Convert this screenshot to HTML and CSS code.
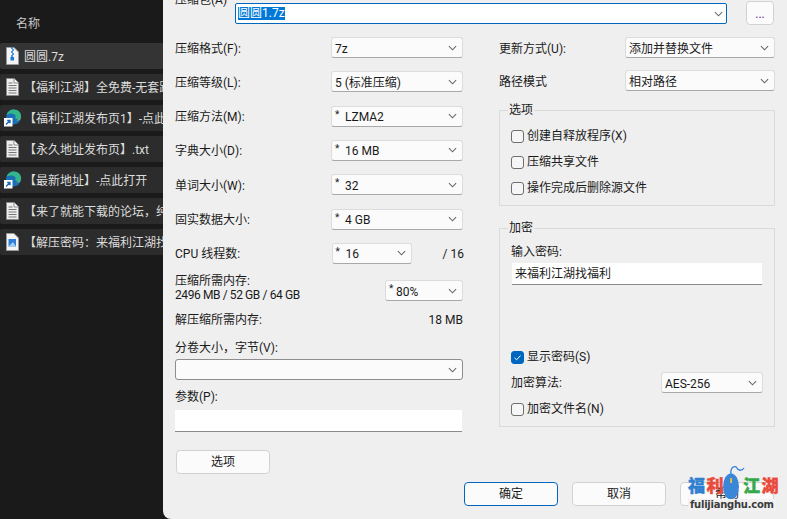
FILE: index.html
```html
<!DOCTYPE html>
<html lang="zh-CN">
<head>
<meta charset="utf-8">
<title>压缩包</title>
<link rel="stylesheet" href="styles.css">
</head>
<body>
<svg class="defs" width="0" height="0" aria-hidden="true">
  <defs>
    <symbol id="chev" viewBox="0 0 10 6"><path d="M1 1 L5 5 L9 1" fill="none" stroke="#666" stroke-width="1.200"/></symbol>
    <symbol id="doc" viewBox="0 0 14 18"><path d="M1.500 .5H9L13.500 5V17.500H1.500Z" fill="#eee" stroke="#8a8a8a"/><path d="M9 .5V5H13.500" fill="#fff" stroke="#8a8a8a"/><path d="M3.500 5H7.500M3.500 7.500H11.500M3.500 10H11.500M3.500 12.500H11.500M3.500 15H11.500" stroke="#777" stroke-width="1"/></symbol>
    <symbol id="edge" viewBox="0 0 18 18">
      <circle cx="9.500" cy="8" r="7.500" fill="#1b6fb4"/>
      <path d="M2.500 6C4 1 9 -.5 13 1C16.500 2.500 17.500 6 17 8.500C16 10.500 12 10.500 11 9C13 7 10.500 4.500 7.500 4.500C5 4.500 3.500 5 2.500 6Z" fill="#35b58a"/>
      <path d="M17 8.500C16.500 11 14 12 12 11C14.500 11 16 10 17 8.500Z" fill="#9ad84e"/>
      <rect x="0" y="9" width="8.500" height="8.500" fill="#fff"/>
      <path d="M2 15.500 L5.500 12 M3.200 11.500H6V14.300" fill="none" stroke="#1668b8" stroke-width="1.300"/>
    </symbol>
    <symbol id="zip" viewBox="0 0 14 18"><path d="M1.500 .5H9L13.500 5V17.500H1.500Z" fill="#f4f4f4" stroke="#9a9a9a"/><path d="M6 1H8M7 3H9M6 5H8M7 7H9M6 9H8" stroke="#1a7ad8" stroke-width="1.400"/><rect x="5.500" y="10" width="3.500" height="3.500" fill="#1a7ad8"/></symbol>
    <symbol id="pic" viewBox="0 0 14 18"><path d="M1.500 .5H9L13.500 5V17.500H1.500Z" fill="#f4f4f4" stroke="#9a9a9a"/><rect x="3.500" y="6" width="7.500" height="7.500" fill="#2f7fd6"/><path d="M3.500 13.500L8 9L11 13.500Z" fill="#a8d0f5"/></symbol>
  </defs>
</svg>

<div class="desktop">
  <aside class="files">
    <div class="files-head">名称</div>
    <ul class="file-list">
      <li class="file file-active"><svg class="ficon"><use href="#zip"/></svg><span class="fname">圆圆.7z</span></li>
      <li class="file"><svg class="ficon"><use href="#doc"/></svg><span class="fname">【福利江湖】全免费-无套路</span></li>
      <li class="file"><svg class="ficon ficon-edge"><use href="#edge"/></svg><span class="fname">【福利江湖发布页1】-点此打开</span></li>
      <li class="file"><svg class="ficon"><use href="#doc"/></svg><span class="fname">【永久地址发布页】.txt</span></li>
      <li class="file"><svg class="ficon ficon-edge"><use href="#edge"/></svg><span class="fname">【最新地址】-点此打开</span></li>
      <li class="file"><svg class="ficon"><use href="#doc"/></svg><span class="fname">【来了就能下载的论坛，纯免费</span></li>
      <li class="file"><svg class="ficon"><use href="#pic"/></svg><span class="fname">【解压密码：来福利江湖找福利</span></li>
    </ul>
  </aside>

  <main class="dialog">
    <div class="toprow">
      <span class="toplabel">压缩包(A)</span>
      <div class="pathbox"><span class="selected">圆圆1.7z</span><svg class="chev chev-path"><use href="#chev"/></svg></div>
      <div class="btn dots">...</div>
    </div>

    <div class="columns">
      <section class="col-left">
        <div class="row"><span>压缩格式(F):</span><div class="select w132">7z<svg class="chev"><use href="#chev"/></svg></div></div>
        <div class="row"><span>压缩等级(L):</span><div class="select w132">5 (标准压缩)<svg class="chev"><use href="#chev"/></svg></div></div>
        <div class="row"><span>压缩方法(M):</span><div class="select w132"><span class="star">*</span>LZMA2<svg class="chev"><use href="#chev"/></svg></div></div>
        <div class="row"><span>字典大小(D):</span><div class="select w132"><span class="star">*</span>16 MB<svg class="chev"><use href="#chev"/></svg></div></div>
        <div class="row"><span>单词大小(W):</span><div class="select w132"><span class="star">*</span>32<svg class="chev"><use href="#chev"/></svg></div></div>
        <div class="row"><span>固实数据大小:</span><div class="select w132"><span class="star">*</span>4 GB<svg class="chev"><use href="#chev"/></svg></div></div>
        <div class="row"><span class="label-cpu">CPU 线程数:</span><div class="select w80"><span class="star">*</span>16<svg class="chev"><use href="#chev"/></svg></div><span class="of">/ 16</span></div>

        <div class="mem">
          <div class="mem-text"><div class="mem-title">压缩所需内存:</div><div class="mem-size">2496 MB / 52 GB / 64 GB</div></div>
          <div class="select w78"><span class="star tight">*</span>80%<svg class="chev"><use href="#chev"/></svg></div>
        </div>
        <div class="decomp"><span>解压缩所需内存:</span><span>18 MB</span></div>
        <div class="stack-label">分卷大小，字节(V):</div>
        <div class="select wide dark-edge"><svg class="chev"><use href="#chev"/></svg></div>
        <div class="stack-label params">参数(P):</div>
        <div class="textbox params-box"></div>
        <div class="btn options">选项</div>
      </section>

      <section class="col-right">
        <div class="row"><span>更新方式(U):</span><div class="select w150">添加并替换文件<svg class="chev"><use href="#chev"/></svg></div></div>
        <div class="row row-path"><span>路径模式</span><div class="select w150">相对路径<svg class="chev"><use href="#chev"/></svg></div></div>

        <fieldset class="group group-opts">
          <legend>选项</legend>
          <label class="check"><span class="box"></span>创建自释放程序(X)</label>
          <label class="check"><span class="box"></span>压缩共享文件</label>
          <label class="check"><span class="box"></span>操作完成后删除源文件</label>
        </fieldset>

        <fieldset class="group group-enc">
          <legend>加密</legend>
          <div class="pw-label">输入密码:</div>
          <div class="textbox pw-box">来福利江湖找福利</div>
          <label class="check show-pw"><span class="box box-on"><svg viewBox="0 0 13 13"><path d="M3.500 6.800L5.600 8.800L9.500 4.500" fill="none" stroke="#fff" stroke-width="1"/></svg></span>显示密码(S)</label>
          <div class="algo"><span>加密算法:</span><div class="select w102">AES-256<svg class="chev"><use href="#chev"/></svg></div></div>
          <label class="check enc-names"><span class="box"></span>加密文件名(N)</label>
        </fieldset>
      </section>
    </div>

    <div class="actions">
      <div class="btn btn-act btn-default">确定</div>
      <div class="btn btn-act">取消</div>
      <div class="btn btn-act">帮助</div>
    </div>

    <div class="watermark">
      <svg class="wm-mouse" viewBox="0 0 24 38">
        <path d="M8 10C7 3 12 1 14 4C15 7 19 7 21 4" fill="none" stroke="#2f80d8" stroke-width="1.300"/>
        <ellipse cx="8" cy="22.500" rx="8" ry="13" fill="#3a86d8"/>
        <rect x="7.200" y="14" width="1.800" height="5" fill="#f2c230"/>
      </svg>
      <div class="wm-title"><span class="wm-blue">福</span><span class="wm-red">利</span><span class="wm-gap"></span><span class="wm-green">江</span><span class="wm-red">湖</span></div>
      <div class="wm-url">fulijianghu.com</div>
    </div>
  </main>
</div>
</body>
</html>
```

FILE: styles.css
```css
* { box-sizing: border-box; }

html, body {
  margin: 0;
  height: 100%;
  overflow: hidden;
  background: #191919;
}

body {
  font: 12px/14px Roboto, "Noto Sans CJK SC", sans-serif;
  color: #1a1a1a;
}

.defs { position: absolute; }

.desktop {
  display: flex;
  width: 787px;
  height: 519px;
}

/* file list */
.files {
  width: 163px;
  flex: none;
  overflow: hidden;
  background: #1a1a1a;
  color: #dcdcdc;
}

.files-head {
  height: 43px;
  padding: 17px 0 0 16px;
  color: #c8c8c8;
}

.file-list {
  list-style: none;
  margin: 0;
  padding: 0;
  display: flex;
  flex-direction: column;
  gap: 5px;
}

.file {
  height: 26px;
  display: flex;
  align-items: center;
  background: #2c2c2c;
  white-space: nowrap;
  border-radius: 2px 0 0 2px;
}

.file-active { background: #343434; }

.ficon {
  width: 14px;
  height: 18px;
  flex: none;
  margin: 0 5px 0 5px;
}

.ficon-edge {
  width: 18px;
  margin: 0 2px 0 4px;
}

.fname {
  overflow: hidden;
  padding-top: 2px;
}

/* dialog */
.dialog {
  position: relative;
  flex: 1;
  min-width: 0;
  height: 519px;
  padding: 1px 12px 0;
  background: #efefef;
  border-bottom-left-radius: 8px;
  overflow: hidden;
}

.toprow {
  display: flex;
  height: 24px;
}

.toplabel {
  width: 60px;
  margin-top: -8px;
  flex: none;
}

.pathbox {
  width: 492px;
  height: 21px;
  margin-top: 2px;
  display: flex;
  align-items: center;
  padding-left: 2px;
  background: #fff;
  border: 1px solid #0067c0;
  border-radius: 2px;
  position: relative;
}

.selected {
  background: #0078d7;
  color: #fff;
  line-height: 13px;
}

.dots {
  width: 28px;
  height: 24px;
  margin-left: 19px;
  color: #5a1a8a;
  line-height: 24px;
}

.columns {
  display: flex;
  gap: 36px;
  margin-top: 12px;
  height: 437px;
}

.col-left { width: 288px; flex: none; }
.col-right { width: 276px; flex: none; }

.row {
  display: flex;
  align-items: center;
  justify-content: space-between;
  height: 21px;
  margin-bottom: 13px;
}

.row > span { padding-top: 2px; }

.col-left .row { margin-bottom: 13.34px; }

.of {
  width: 52px;
  margin-right: -1px;
  flex: none;
  text-align: right;
}

.select {
  position: relative;
  height: 21px;
  display: flex;
  align-items: center;
  padding: 2px 0 0 3px;
  background: #fbfbfb;
  border: 1px solid #dcdcdc;
  border-bottom-color: #a8a8a8;
  border-radius: 3px;
  white-space: nowrap;
}

.w132 { width: 132px; }
.w80 { width: 80px; flex: none; }
.w78 { width: 78px; margin-top: 7px; }
.w150 { width: 150px; }
.w102 { width: 102px; }
.wide { width: 288px; }

.dark-edge { border-color: #8d8d8d; }

.star {
  width: 10px;
  font-size: 10px;
  line-height: 12px;
  align-self: flex-start;
}

.tight { width: 7px; }

.chev {
  position: absolute;
  right: 5px;
  top: 50%;
  width: 9px;
  height: 6px;
  margin-top: -3px;
}

.chev-path { right: 3px; }

.label-cpu { width: 156px; flex: none; }

.mem {
  display: flex;
  justify-content: space-between;
  margin-top: -4px;
  height: 30px;
  align-items: flex-start;
}

.mem-text { line-height: 15px; }
.mem-title { padding-top: 1px; margin-bottom: -1px; }
.mem-size { letter-spacing: -.4px; }

.decomp {
  display: flex;
  justify-content: space-between;
  margin-top: 10px;
}

.stack-label { margin-top: 14px; margin-bottom: 4px; }
.params { margin-top: 10px; margin-bottom: 6px; }

.textbox {
  background: #fff;
  border-bottom: 1px solid #8a8a8a;
}

.params-box { width: 287px; height: 22px; }

.btn {
  background: #fbfbfb;
  border: 1px solid #d2d2d2;
  border-radius: 4px;
  text-align: center;
}

.options {
  width: 94px;
  height: 24px;
  margin: 18px 0 0 1px;
  line-height: 22px;
}

.row-path { margin-top: -1px; }

.group {
  margin: 0;
  padding: 0 11px;
  min-width: 0;
  border: 1px solid #dadada;
}

.group legend {
  margin-left: -3px;
  padding: 0 1px;
  line-height: 14px;
}

.group-opts {
  height: 103px;
  margin-top: -1px;
}

.group-enc {
  height: 206px;
  margin-top: 15px;
}

.check {
  display: flex;
  align-items: center;
  gap: 3px;
  height: 14px;
  margin-bottom: 12px;
}

.group-opts .check:first-of-type { margin-top: 12px; }

.box {
  width: 13px;
  height: 13px;
  flex: none;
  background: #f6f6f6;
  border: 1px solid #6e6e6e;
  border-radius: 3px;
}

.box-on {
  background: #0067c0;
  border-color: #0067c0;
}

.box-on svg {
  display: block;
  width: 13px;
  height: 13px;
  margin: -1px;
}

.pw-label { margin-top: 10px; }

.pw-box {
  width: 250px;
  height: 22px;
  margin: 4px 0 0 1px;
  padding: 4px 0 0 3px;
}

.show-pw { margin-top: 65px; margin-bottom: 8px; }

.algo {
  display: flex;
  justify-content: space-between;
  align-items: center;
  width: 252px;
  margin-bottom: 9px;
}

.enc-names { margin-bottom: 0; }

.actions {
  display: flex;
  justify-content: flex-end;
  gap: 14px;
  margin-top: 8px;
  padding-right: 1px;
}

.btn-act {
  width: 94px;
  height: 24px;
  line-height: 22px;
}

.btn-default {
  border: 1px solid #0067c0;
}

/* watermark over the dialog's corner */
.watermark {
  position: absolute;
  left: 525px;
  top: 464px;
  width: 92px;
  height: 48px;
}

.wm-mouse {
  position: absolute;
  left: 35px;
  top: 0;
  width: 24px;
  height: 38px;
}

.wm-title {
  position: absolute;
  left: 0;
  top: 10px;
  display: flex;
  letter-spacing: 1.500px;
  font: 900 17px/22px "Noto Sans CJK SC", sans-serif;
  -webkit-text-stroke: .4px currentColor;
}

.wm-gap { width: 18px; }
.wm-blue { color: #2f80d0; }
.wm-red { color: #ea4a3c; }
.wm-green { color: #35a84a; }

.wm-url {
  position: absolute;
  left: 0;
  top: 35px;
  padding: 0 2px;
  background: #f1f1f1;
  font: 700 10px/12px "DejaVu Sans", sans-serif;
  letter-spacing: -.25px;
  color: #3c3c3c;
  white-space: nowrap;
}
```
